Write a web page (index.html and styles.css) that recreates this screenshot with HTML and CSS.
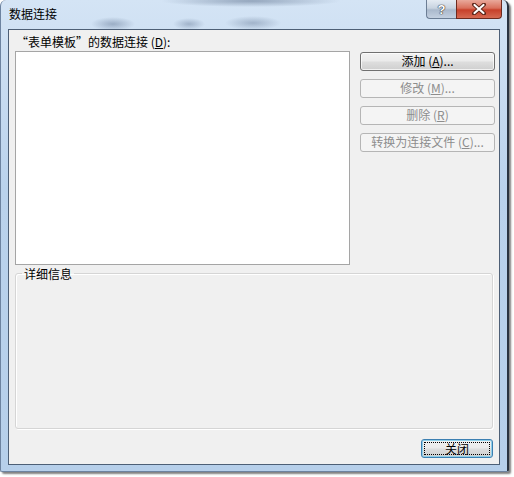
FILE: index.html
```html
<!DOCTYPE html>
<html lang="zh-CN">
<head>
<meta charset="utf-8">
<title>数据连接</title>
<link rel="stylesheet" href="styles.css">
</head>
<body>
<div class="window">
  <div class="titlebar">
    <span class="title">数据连接</span>
    <div class="caption-btns">
      <div class="cap help"><span>?</span></div>
      <div class="cap close">
        <svg width="14" height="12" viewBox="0 0 14 12">
          <path d="M2 1.5 L12 10.5 M12 1.5 L2 10.5" stroke="#5a2418" stroke-width="4" stroke-linecap="round"/>
          <path d="M2.5 2 L11.5 10 M11.5 2 L2.5 10" stroke="#ffffff" stroke-width="2.2" stroke-linecap="round"/>
        </svg>
      </div>
    </div>
  </div>
  <div class="client">
    <div class="top">
      <div class="label">“表单模板”的数据连接 (<u>D</u>):</div>
      <div class="list"></div>
      <div class="btns">
        <button class="btn">添加 (<u>A</u>)...</button>
        <button class="btn" disabled>修改 (<u>M</u>)...</button>
        <button class="btn" disabled>删除 (<u>R</u>)</button>
        <button class="btn" disabled>转换为连接文件 (<u>C</u>)...</button>
      </div>
    </div>
    <fieldset class="details"><legend>详细信息</legend></fieldset>
    <div class="footer">
      <button class="btn default"><span class="focus">关闭</span></button>
    </div>
  </div>
</div>
</body>
</html>
```
FILE: styles.css
```css
* { box-sizing: border-box; }
html, body {
  margin: 0;
  padding: 0;
  background: #ffffff;
  width: 514px;
  height: 477px;
  overflow: hidden;
  font-family: "Noto Sans CJK SC", "Liberation Sans", sans-serif;
  font-size: 12px;
  color: #000;
}
.window {
  width: 509px;
  height: 472px;
  padding: 0 7px 6px 7px;
  border-radius: 6px 6px 2px 2px;
  border: 1px solid #6d83a0;
  border-right: 2px solid #2a3340;
  border-top: none;
  background:
    radial-gradient(ellipse 22px 7px at 112px 24px, rgba(90,110,140,0.45), transparent),
    radial-gradient(ellipse 16px 6px at 188px 24px, rgba(90,110,140,0.40), transparent),
    radial-gradient(ellipse 28px 7px at 252px 23px, rgba(90,110,140,0.40), transparent),
    radial-gradient(ellipse 90px 6px at 250px 1px, rgba(70,90,120,0.45), transparent),
    linear-gradient(#d4e4f5, #bad2ec 40%, #b6cfea);
  box-shadow: 2px 2px 2px rgba(0,0,0,0.5);
  display: flex;
  flex-direction: column;
}
.titlebar {
  height: 29px;
  display: flex;
  align-items: flex-start;
  justify-content: space-between;
}
.title {
  margin-top: 6px;
  margin-left: 1px;
  font-size: 12px;
  line-height: 16px;
  color: #000;
}
.caption-btns {
  display: flex;
  margin-right: -2px;
}
.cap {
  height: 19px;
  display: flex;
  align-items: center;
  justify-content: center;
  border: 1px solid #6b7d94;
  border-top: none;
}
.help {
  width: 30px;
  border-radius: 0 0 0 4px;
  border-right: none;
  background: linear-gradient(#e4ebf3, #c8d3e0 45%, #aab9cc 55%, #c3d0e0);
}
.help span {
  font-family: "Liberation Sans", sans-serif;
  font-weight: bold;
  font-size: 13px;
  color: #fff;
  text-shadow: 0 0 1px #333, 0 0 1px #333, 0 0 1px #333;
}
.close {
  width: 46px;
  border-radius: 0 0 4px 0;
  border-color: #6e2a1e;
  background: linear-gradient(#e9a99b, #d9705c 45%, #c7402a 55%, #d66a52);
}
.client {
  height: 437px;
  background: #f0f0f0;
  border: 1px solid #4d5f76;
  display: flex;
  flex-direction: column;
}
.top {
  display: grid;
  grid-template-columns: 335px 135px;
  grid-template-rows: 21px 214px;
  column-gap: 10px;
  padding-left: 6px;
}
.label {
  grid-column: 1 / 3;
  padding-top: 5px;
  padding-left: 1px;
  line-height: 14px;
  white-space: nowrap;
}
.list {
  background: #fff;
  border: 1px solid #a5a5a5;
}
.btns {
  display: flex;
  flex-direction: column;
  gap: 8px;
  padding-top: 1px;
}
.btn {
  height: 19px;
  padding: 0;
  font-family: inherit;
  font-size: 12px;
  line-height: 14px;
  color: #000;
  border: 1px solid #707070;
  border-radius: 3px;
  background: linear-gradient(#f2f2f2, #ebebeb 45%, #dddddd 55%, #cfcfcf);
  box-shadow: inset 0 0 0 1px rgba(255,255,255,0.7);
  white-space: nowrap;
}
.btn:disabled {
  color: #8d8d8d;
  border-color: #b5b5b5;
  background: #f4f4f4;
  box-shadow: none;
}
.details {
  margin: 2px 6px 0 6px;
  padding: 0 6px;
  height: 162px;
  border: 1px solid #d5d5d5;
  border-radius: 3px;
  box-shadow: inset 1px 1px 0 #fff, 1px 1px 0 #fff;
}
.details legend {
  padding: 0 2px;
  line-height: 14px;
  font-size: 12px;
}
.footer {
  display: flex;
  justify-content: flex-end;
  padding: 10px 6px 0 0;
}
.default {
  width: 72px;
  height: 19px;
  border-color: #3c7fb1;
  box-shadow: 0 0 0 1px #8fd0ea inset;
  padding: 2px;
}
.focus {
  display: block;
  height: 100%;
  border: 1px dotted #000;
  line-height: 11px;
}
```
